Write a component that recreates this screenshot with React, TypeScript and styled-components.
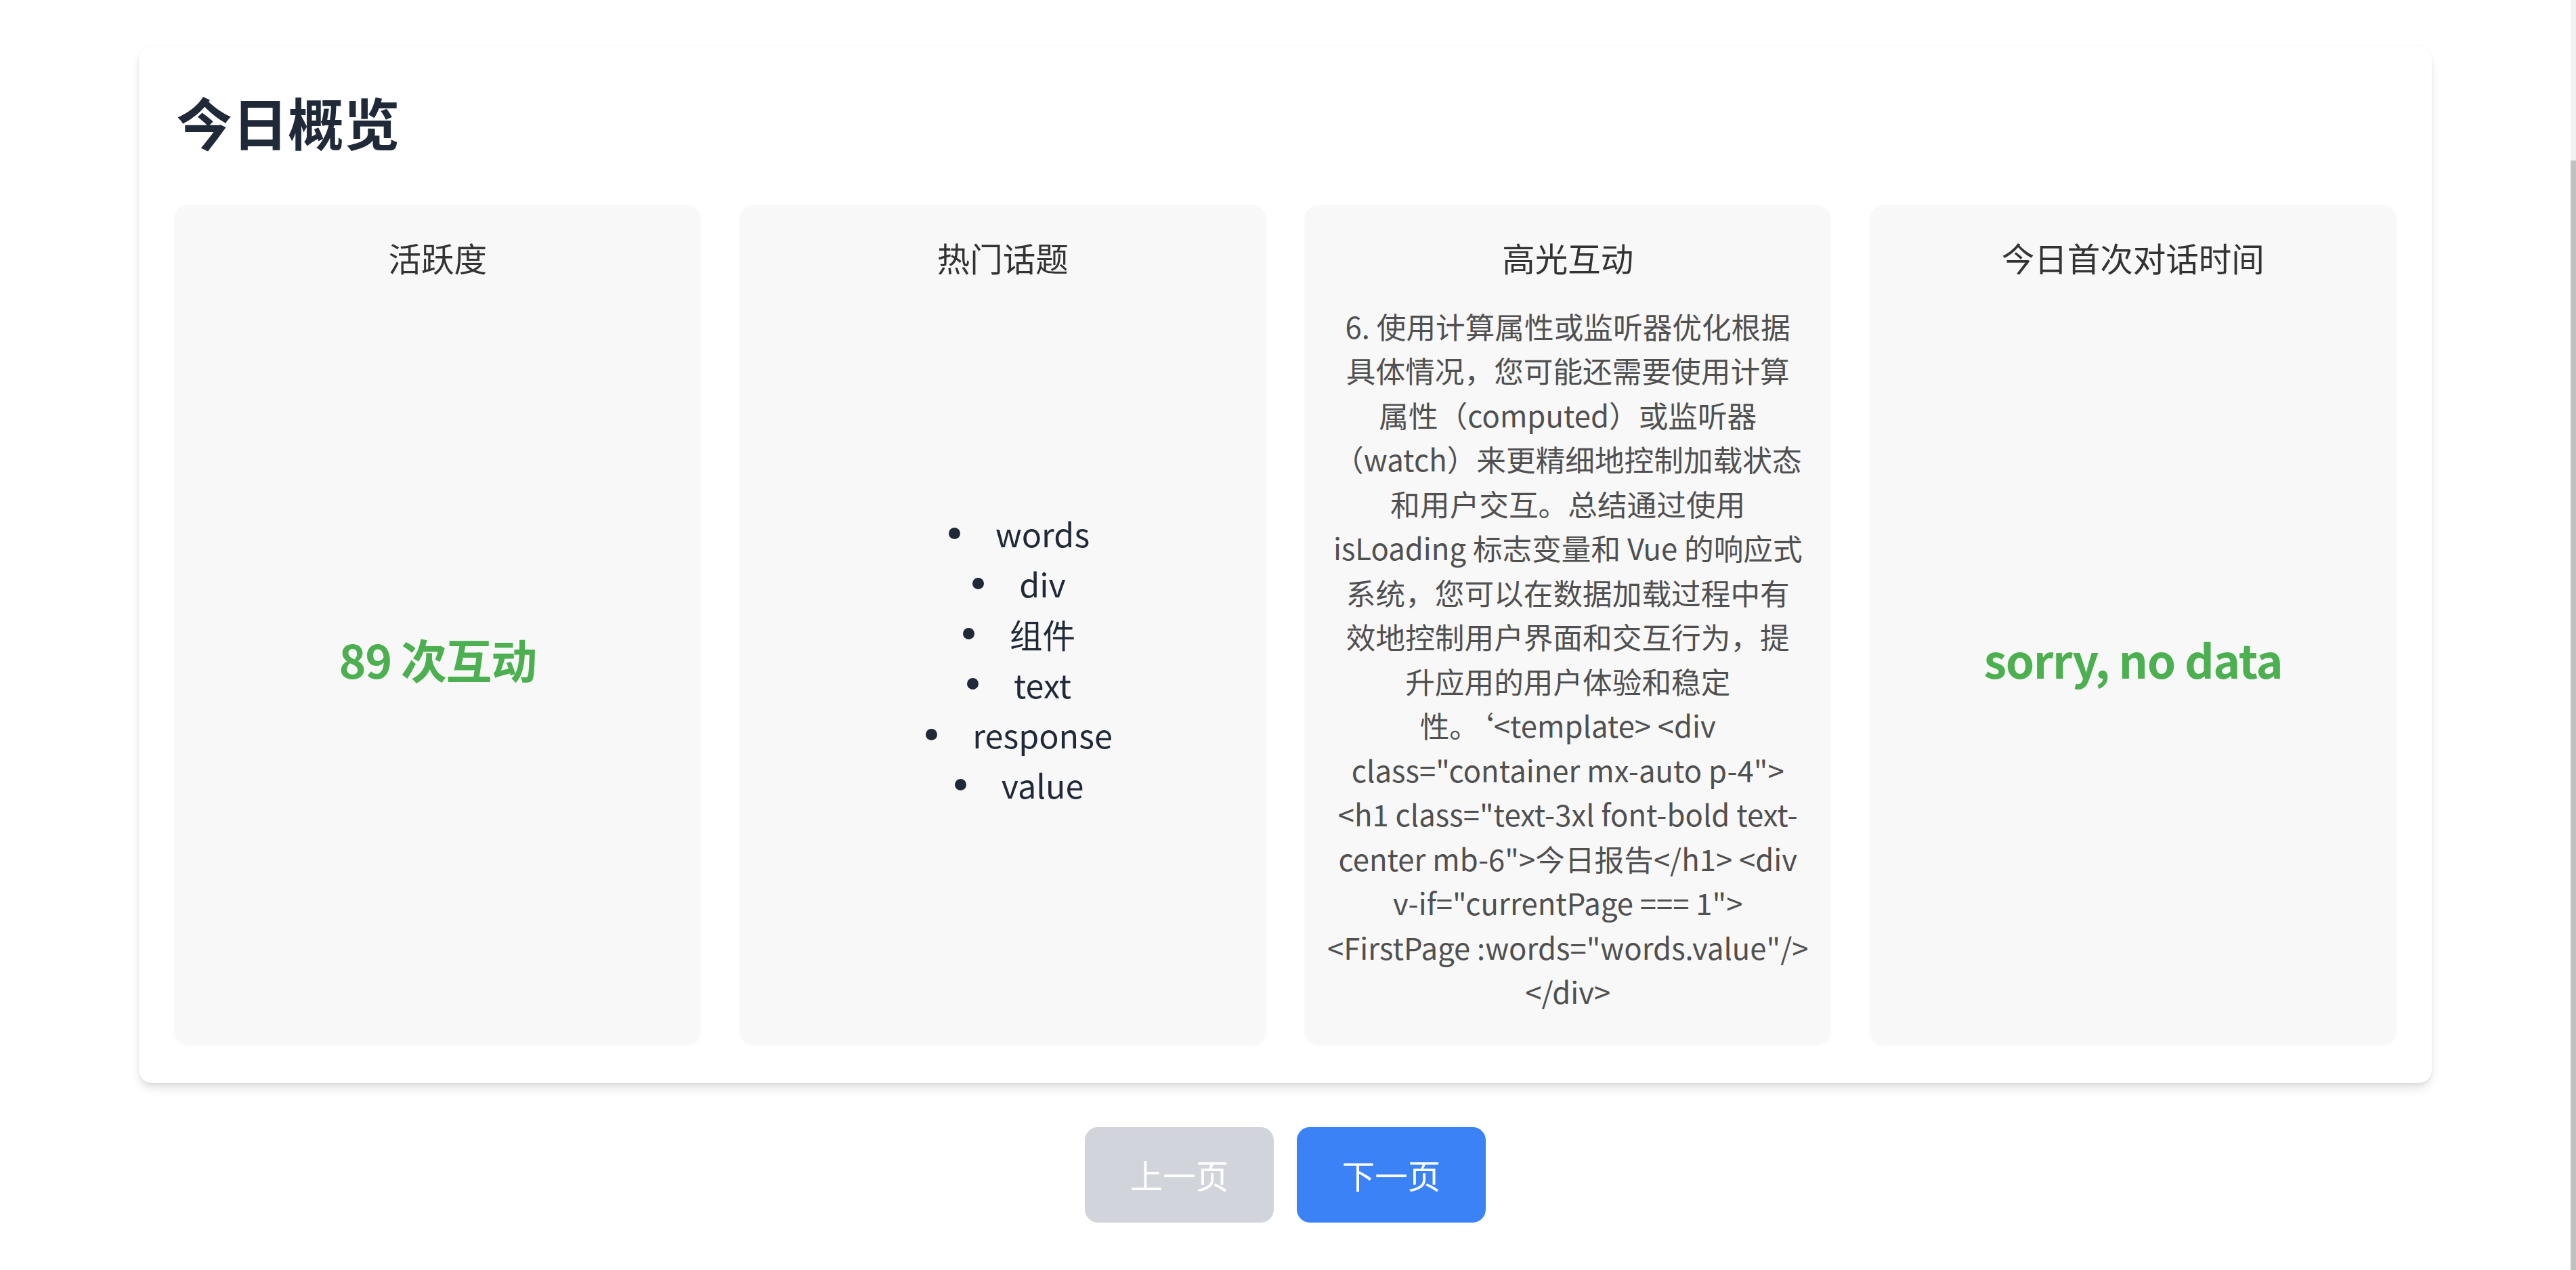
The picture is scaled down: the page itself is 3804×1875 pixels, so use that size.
import React from "react";
import styled, { createGlobalStyle } from "styled-components";

const K = 3804 / 1568;
const u = (n: number) => `${+(n * K).toFixed(2)}px`;

const GlobalStyle = createGlobalStyle`
  html, body {
    margin: 0;
    padding: 0;
    height: 100%;
    overflow: hidden;
    background: #ffffff;
  }
  body {
    font-family: "Noto Sans CJK SC", "Noto Sans", sans-serif;
    color: #1f2937;
  }
  #root {
    height: 100%;
  }
  * {
    box-sizing: border-box;
  }
`;

const Viewport = styled.div`
  display: flex;
  height: 100vh;
`;

const Page = styled.main`
  flex: 1;
  min-width: 0;
  display: flex;
  flex-direction: column;
  align-items: center;
  padding: ${u(28)} 0 ${u(29)};
`;

const ScrollRail = styled.div`
  width: 8px;
  display: flex;
  flex-direction: column;
  background: #f1f1f1;
`;

const ScrollThumb = styled.div`
  flex: 1;
  margin-top: 237px;
  background: #c1c1c1;
`;

const Panel = styled.section`
  width: ${u(1396)};
  padding: ${u(24)} ${u(22)};
  background: #ffffff;
  border-radius: ${u(8)};
  box-shadow: 0 ${u(4)} ${u(6)} ${u(-1)} rgba(0, 0, 0, 0.1),
    0 ${u(2)} ${u(4)} ${u(-2)} rgba(0, 0, 0, 0.1), 0 0 ${u(1)} rgba(0, 0, 0, 0.06);
`;

const PanelTitle = styled.h2`
  margin: 0 0 ${u(29)} ${u(1)};
  font-size: ${u(34)};
  line-height: ${u(44)};
  font-weight: 700;
  color: #1f2937;
`;

const CardGrid = styled.div`
  display: grid;
  grid-template-columns: repeat(4, minmax(0, 1fr));
  gap: ${u(24)};
`;

const Card = styled.article`
  display: flex;
  flex-direction: column;
  min-width: 0;
  padding: ${u(16)} ${u(16)} ${u(18)};
  background: #f8f8f8;
  border-radius: ${u(8)};
  box-shadow: 0 ${u(1)} ${u(2)} rgba(0, 0, 0, 0.04);
  text-align: center;
`;

const CardTitle = styled.h3`
  margin: 0 0 ${u(12)};
  font-size: ${u(20)};
  line-height: ${u(32)};
  font-weight: 400;
  color: #333333;
`;

const CardBody = styled.div`
  flex: 1;
  display: flex;
  flex-direction: column;
  align-items: center;
  justify-content: center;
`;

const Value = styled.div`
  font-size: ${u(28)};
  line-height: ${u(36)};
  font-weight: 700;
  letter-spacing: -0.02em;
  color: #4caf50;
`;

const TopicList = styled.ul`
  align-self: stretch;
  margin: 0;
  padding: 0 0 0 ${u(20)};
  list-style: none;
`;

const TopicItem = styled.li`
  display: flex;
  align-items: center;
  justify-content: center;
  font-size: ${u(20)};
  line-height: ${u(30.6)};
  color: #1f2937;
  &::before {
    content: "";
    flex-shrink: 0;
    width: ${u(7)};
    height: ${u(7)};
    margin-right: ${u(21.5)};
    border-radius: 50%;
    background: currentColor;
  }
`;

const Highlight = styled.div`
  align-self: stretch;
  display: flex;
  flex-direction: column;
  align-items: center;
  font-size: ${u(18)};
  line-height: ${u(27)};
  color: #505050;
`;

const HighlightLine = styled.span`
  display: block;
  white-space: pre;
`;

const Pager = styled.nav`
  display: flex;
  gap: ${u(14)};
  margin-top: ${u(27)};
`;

const PageButton = styled.button<{ $active?: boolean }>`
  height: ${u(58)};
  padding: 0 ${u(27.5)};
  border: none;
  border-radius: ${u(8)};
  font-family: inherit;
  font-size: ${u(20)};
  line-height: ${u(28)};
  color: #ffffff;
  background: ${(p) => (p.$active ? "#3b82f6" : "#d1d5db")};
  cursor: ${(p) => (p.$active ? "pointer" : "not-allowed")};
`;

const topics = ["words", "div", "组件", "text", "response", "value"];

const highlightLines = [
  "6. 使用计算属性或监听器优化根据",
  "具体情况，您可能还需要使用计算",
  "属性（computed）或监听器",
  "（watch）来更精细地控制加载状态",
  "和用户交互。总结通过使用",
  "isLoading 标志变量和 Vue 的响应式",
  "系统，您可以在数据加载过程中有",
  "效地控制用户界面和交互行为，提",
  "升应用的用户体验和稳定",
  "性。‘<template> <div",
  'class="container mx-auto p-4">',
  '<h1 class="text-3xl font-bold text-',
  'center mb-6">今日报告</h1> <div',
  'v-if="currentPage === 1">',
  '<FirstPage :words="words.value"/>',
  "</div>",
];

export default function App() {
  return (
    <>
      <GlobalStyle />
      <Viewport>
        <Page>
          <Panel>
            <PanelTitle>今日概览</PanelTitle>
            <CardGrid>
              <Card>
                <CardTitle>活跃度</CardTitle>
                <CardBody>
                  <Value>89 次互动</Value>
                </CardBody>
              </Card>
              <Card>
                <CardTitle>热门话题</CardTitle>
                <CardBody>
                  <TopicList>
                    {topics.map((t) => (
                      <TopicItem key={t}>{t}</TopicItem>
                    ))}
                  </TopicList>
                </CardBody>
              </Card>
              <Card>
                <CardTitle>高光互动</CardTitle>
                <CardBody>
                  <Highlight>
                    {highlightLines.map((line, i) => (
                      <HighlightLine key={i}>{line}</HighlightLine>
                    ))}
                  </Highlight>
                </CardBody>
              </Card>
              <Card>
                <CardTitle>今日首次对话时间</CardTitle>
                <CardBody>
                  <Value>sorry, no data</Value>
                </CardBody>
              </Card>
            </CardGrid>
          </Panel>
          <Pager>
            <PageButton disabled>上一页</PageButton>
            <PageButton $active>下一页</PageButton>
          </Pager>
        </Page>
        <ScrollRail aria-hidden="true">
          <ScrollThumb />
        </ScrollRail>
      </Viewport>
    </>
  );
}
